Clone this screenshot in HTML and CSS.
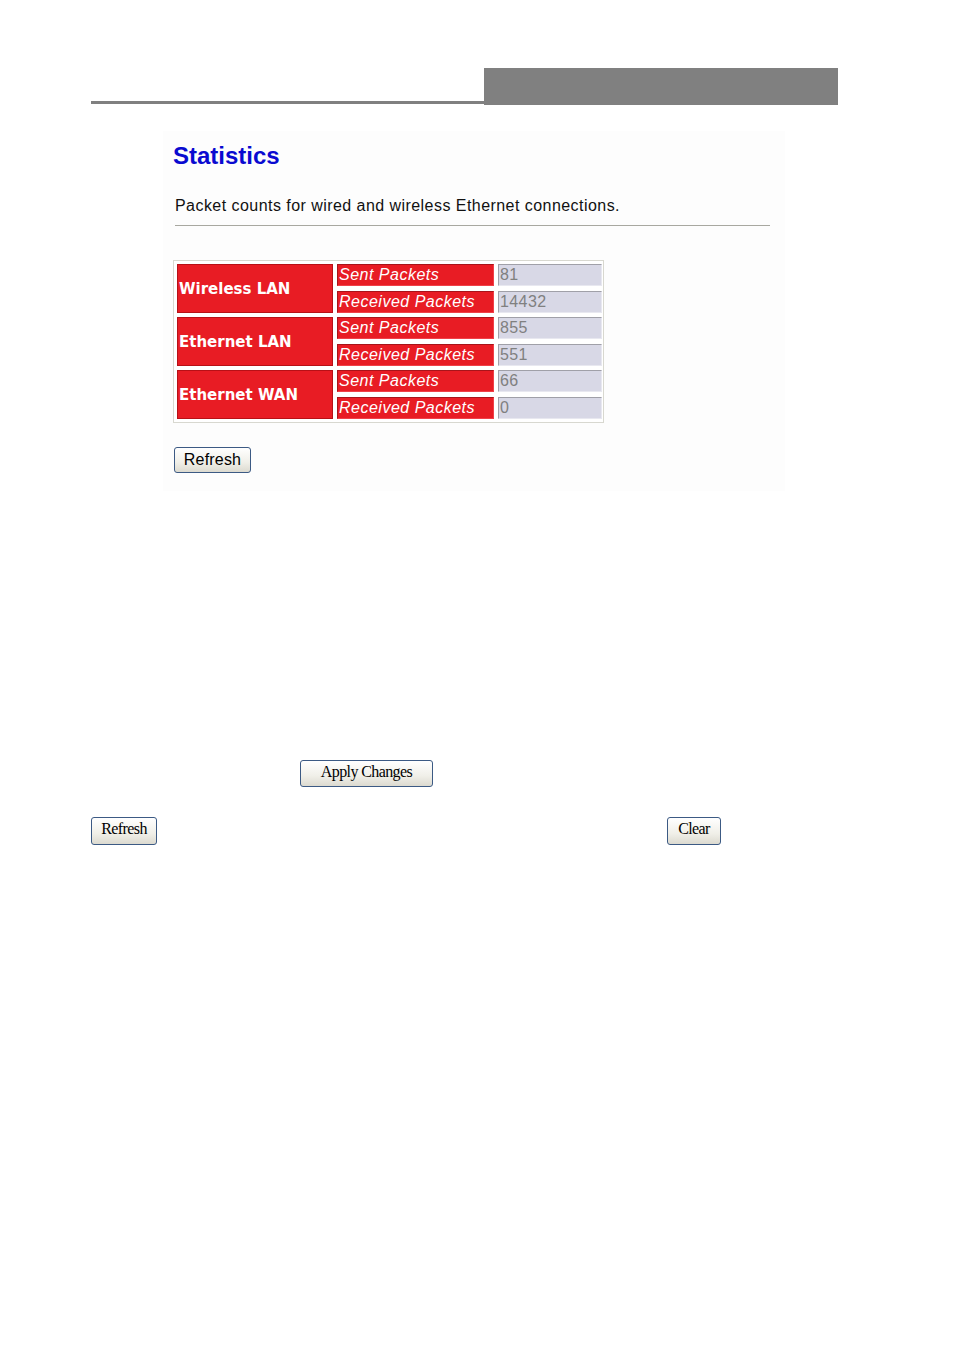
FILE: index.html
```html
<!DOCTYPE html>
<html>
<head>
<meta charset="utf-8">
<link rel="stylesheet" href="styles.css">
</head>
<body>
<div class="page">
  <div class="header">
    <div class="header-line"></div>
    <div class="header-box"></div>
  </div>
  <div class="panel">
    <h1 class="title">Statistics</h1>
    <p class="desc">Packet counts for wired and wireless Ethernet connections.</p>
    <div class="rule"></div>
    <div class="stats">
      <div class="group">
        <div class="label">Wireless LAN</div>
        <div class="name">Sent Packets</div><div class="value">81</div>
        <div class="name">Received Packets</div><div class="value">14432</div>
      </div>
      <div class="group">
        <div class="label">Ethernet LAN</div>
        <div class="name">Sent Packets</div><div class="value">855</div>
        <div class="name">Received Packets</div><div class="value">551</div>
      </div>
      <div class="group">
        <div class="label">Ethernet WAN</div>
        <div class="name">Sent Packets</div><div class="value">66</div>
        <div class="name">Received Packets</div><div class="value">0</div>
      </div>
    </div>
    <button class="btn btn-sans btn-refresh1">Refresh</button>
  </div>
  <div class="apply-row">
    <button class="btn btn-serif btn-apply">Apply Changes</button>
  </div>
  <div class="bottom-row">
    <button class="btn btn-serif btn-refresh2">Refresh</button>
    <button class="btn btn-serif btn-clear">Clear</button>
  </div>
</div>
</body>
</html>
```

FILE: styles.css
```css
html, body {
  margin: 0;
  padding: 0;
  background: #ffffff;
}
.page {
  width: 954px;
  height: 1350px;
  position: relative;
  font-family: "Liberation Sans", Arial, sans-serif;
}
.header {
  display: flex;
  align-items: flex-end;
  padding-top: 68px;
  padding-left: 91px;
}
.header-line {
  width: 393px;
  height: 3px;
  background: #808080;
  margin-bottom: 1px;
}
.header-box {
  width: 354px;
  height: 37px;
  background: #808080;
}
.panel {
  margin-top: 26px;
  margin-left: 163px;
  width: 622px;
  height: 360px;
  background: #fdfdfd;
  padding: 11px 0 0 10px;
  box-sizing: border-box;
}
.title {
  margin: 0;
  font-family: "Liberation Sans", Arial, sans-serif;
  font-weight: bold;
  font-size: 24px;
  line-height: 28px;
  color: #0a0ad0;
}
.desc {
  margin: 27px 0 0 2px;
  font-size: 16px;
  line-height: 18px;
  letter-spacing: 0.45px;
  color: #111111;
}
.rule {
  margin: 10px 0 0 2px;
  width: 595px;
  height: 1px;
  background: #a8a8a0;
}
.stats {
  margin-top: 34px;
  width: 431px;
  box-sizing: border-box;
  border: 1px solid #d8d8d0;
  padding: 3px;
  display: flex;
  flex-direction: column;
  gap: 4px;
  background: #ffffff;
}
.group {
  display: grid;
  grid-template-columns: 156px 157px 104px;
  grid-template-rows: 22px 22px;
  column-gap: 4px;
  row-gap: 5px;
}
.label {
  grid-row: 1 / 3;
  background: #e81c24;
  color: #ffffff;
  font-family: "DejaVu Sans", Verdana, sans-serif;
  font-weight: bold;
  font-size: 15px;
  display: flex;
  align-items: center;
  padding-left: 1px;
  border: 1px solid #b81016;
  box-sizing: border-box;
}
.name {
  background: #e81c24;
  color: #ffffff;
  font-style: italic;
  font-size: 16px;
  line-height: 20px;
  letter-spacing: 0.5px;
  padding-left: 1px;
  border: 1px solid #a8141a;
  border-right-color: #f04048;
  border-bottom-color: #f04048;
  box-sizing: border-box;
  white-space: nowrap;
  overflow: hidden;
}
.value {
  background: #d8d8e6;
  color: #808080;
  font-size: 16px;
  line-height: 20px;
  letter-spacing: 0.4px;
  padding-left: 1px;
  border: 1px solid #a0a0a8;
  border-right-color: #e8e8f0;
  border-bottom-color: #e8e8f0;
  box-sizing: border-box;
}
.btn {
  display: inline-block;
  background: linear-gradient(#ffffff, #f0efe8 60%, #dcdad0);
  border: 1px solid #3c5a84;
  border-radius: 3px;
  padding: 0;
  color: #000000;
  box-sizing: border-box;
  cursor: pointer;
}
.btn-sans {
  font-family: "Liberation Sans", Arial, sans-serif;
  font-size: 16px;
  letter-spacing: 0.2px;
}
.btn-serif {
  font-family: "Liberation Serif", "Times New Roman", serif;
  font-size: 16px;
  letter-spacing: -0.6px;
  padding-bottom: 4px;
}
.btn-refresh1 {
  margin-top: 24px;
  margin-left: 1px;
  width: 77px;
  height: 26px;
}
.apply-row {
  margin-top: 269px;
  padding-left: 300px;
  height: 27px;
}
.btn-apply {
  width: 133px;
  height: 27px;
}
.bottom-row {
  margin-top: 30px;
  padding-left: 91px;
  display: flex;
}
.btn-refresh2 {
  width: 66px;
  height: 28px;
}
.btn-clear {
  margin-left: 510px;
  width: 54px;
  height: 28px;
}
```
